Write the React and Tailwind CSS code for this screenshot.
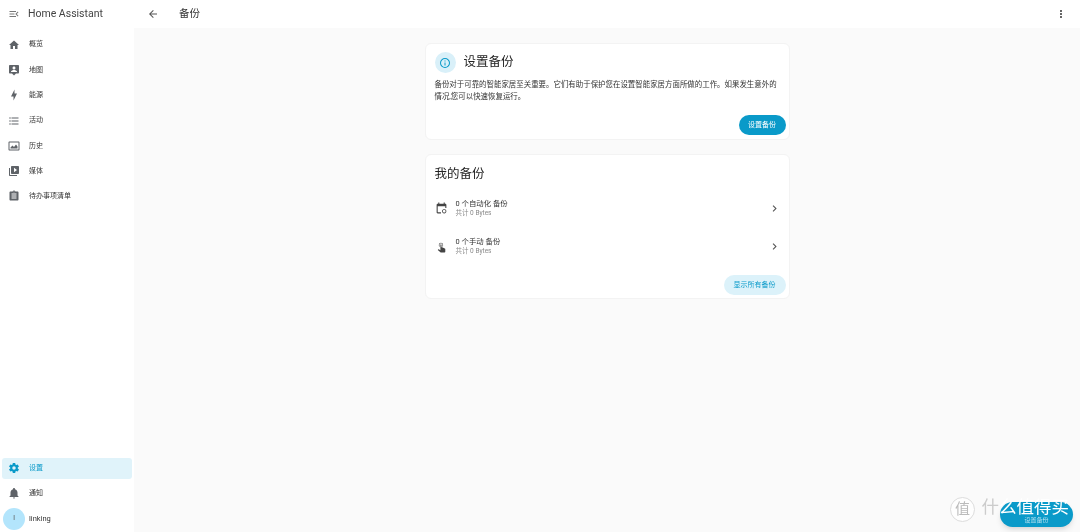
import React from "react";
import { MdArrowBack, MdChevronRight, MdMoreVert } from "react-icons/md";

const cjk = "font-['Roboto','Noto_Sans_CJK_SC',sans-serif]";

// mdi icon paths
const paths = {
  menu: "M21 15.61L19.59 17L14.58 12L19.59 7L21 8.39L17.44 12L21 15.61M3 6H16V8H3V6M3 13V11H13V13H3M3 18V16H16V18H3Z",
  home: "M10 20V14H14V20H19V12H22L12 3L2 12H5V20H10Z",
  map: "M20 2H4C2.9 2 2 2.9 2 4V17C2 18.1 2.9 19 4 19H8L12 23L16 19H20C21.1 19 22 18.1 22 17V4C22 2.9 21.1 2 20 2M12 5C13.66 5 15 6.34 15 8S13.66 11 12 11 9 9.66 9 8 10.34 5 12 5M18 16H6V15C6 13 10 11.9 12 11.9S18 13 18 15V16Z",
  bolt: "M11 15H6L13 1V9H18L11 23V15Z",
  list: "M7 5H21V7H7V5M7 13V11H21V13H7M4 4.5C4.83 4.5 5.5 5.17 5.5 6S4.83 7.5 4 7.5 2.5 6.83 2.5 6 3.17 4.5 4 4.5M4 10.5C4.83 10.5 5.5 11.17 5.5 12S4.83 13.5 4 13.5 2.5 12.83 2.5 12 3.17 10.5 4 10.5M7 19V17H21V19H7M4 16.5C4.83 16.5 5.5 17.17 5.5 18S4.83 19.5 4 19.5 2.5 18.83 2.5 18 3.17 16.5 4 16.5Z",
  history: "M21 3H3C1.9 3 1 3.9 1 5V19C1 20.1 1.9 21 3 21H21C22.1 21 23 20.1 23 19V5C23 3.9 22.1 3 21 3M21 19H3V5H21V19M5 17H19V13L16 9L12 14L9 11L5 15V17Z",
  media: "M4 6H2V20C2 21.1 2.9 22 4 22H18V20H4V6M20 2H8C6.9 2 6 2.9 6 4V16C6 17.1 6.9 18 8 18H20C21.1 18 22 17.1 22 16V4C22 2.9 21.1 2 20 2M12 14.5V5.5L18 10L12 14.5Z",
  todo: "M19 3H14.82C14.4 1.84 13.3 1 12 1S9.6 1.84 9.18 3H5C3.9 3 3 3.9 3 5V19C3 20.1 3.9 21 5 21H19C20.1 21 21 20.1 21 19V5C21 3.9 20.1 3 19 3M12 3C12.55 3 13 3.45 13 4S12.55 5 12 5 11 4.55 11 4 11.45 3 12 3M17 17H7V15H17V17M17 13H7V11H17V13M17 9H7V7H17V9Z",
  cog: "M12 15.5A3.5 3.5 0 0 1 8.5 12A3.5 3.5 0 0 1 12 8.5A3.5 3.5 0 0 1 15.5 12A3.5 3.5 0 0 1 12 15.5M19.43 12.97C19.47 12.65 19.5 12.33 19.5 12C19.5 11.67 19.47 11.34 19.43 11L21.54 9.37C21.73 9.22 21.78 8.95 21.66 8.73L19.66 5.27C19.54 5.05 19.27 4.96 19.05 5.05L16.56 6.05C16.04 5.66 15.5 5.32 14.87 5.07L14.5 2.42C14.46 2.18 14.25 2 14 2H10C9.75 2 9.54 2.18 9.5 2.42L9.13 5.07C8.5 5.32 7.96 5.66 7.44 6.05L4.95 5.05C4.73 4.96 4.46 5.05 4.34 5.27L2.34 8.73C2.21 8.95 2.27 9.22 2.46 9.37L4.57 11C4.53 11.34 4.5 11.67 4.5 12C4.5 12.33 4.53 12.65 4.57 12.97L2.46 14.63C2.27 14.78 2.21 15.05 2.34 15.27L4.34 18.73C4.46 18.95 4.73 19.03 4.95 18.95L7.44 17.94C7.96 18.34 8.5 18.68 9.13 18.93L9.5 21.58C9.54 21.82 9.75 22 10 22H14C14.25 22 14.46 21.82 14.5 21.58L14.87 18.93C15.5 18.67 16.04 18.34 16.56 17.94L19.05 18.95C19.27 19.03 19.54 18.95 19.66 18.73L21.66 15.27C21.78 15.05 21.73 14.78 21.54 14.63L19.43 12.97Z",
  bell: "M21 19V20H3V19L5 17V11C5 7.9 7.03 5.17 10 4.29V4C10 2.9 10.9 2 12 2S14 2.9 14 4V4.29C16.97 5.17 19 7.9 19 11V17L21 19M14 21C14 22.1 13.1 23 12 23S10 22.1 10 21",
  info: "M11 9H13V7H11M12 20C7.59 20 4 16.41 4 12S7.59 4 12 4 20 7.59 20 12 16.41 20 12 20M12 2A10 10 0 0 0 2 12A10 10 0 0 0 12 22A10 10 0 0 0 22 12A10 10 0 0 0 12 2M11 17H13V11H11V17Z",
  calendar: "M19 3H18V1H16V3H8V1H6V3H5C3.9 3 3 3.9 3 5V19C3 20.1 3.9 21 5 21H11V19H5V8H19V11H21V5C21 3.9 20.1 3 19 3M17 13C14.8 13 13 14.8 13 17S14.8 21 17 21 21 19.2 21 17 19.2 13 17 13M17 19.5C15.6 19.5 14.5 18.4 14.5 17S15.6 14.5 17 14.5 19.5 15.6 19.5 17 18.4 19.5 17 19.5Z",
  hand: "M10 9A1 1 0 0 1 11 8A1 1 0 0 1 12 9V13.47L13.21 13.6L18.15 15.79C18.68 16.03 19 16.56 19 17.14V21.5C18.97 22.32 18.32 22.97 17.5 23H11C10.62 23 10.26 22.85 10 22.57L5.1 18.37L5.84 17.6C6.03 17.39 6.3 17.28 6.58 17.28H6.8L10 19V9M11 5A4 4 0 0 1 15 9C15 10.5 14.2 11.77 13 12.46V11.24C13.61 10.69 14 9.89 14 9A3 3 0 0 0 11 6A3 3 0 0 0 8 9C8 9.89 8.39 10.69 9 11.24V12.46C7.8 11.77 7 10.5 7 9A4 4 0 0 1 11 5Z",
};

function Icon({ name, className }) {
  return (
    <svg viewBox="0 0 24 24" fill="currentColor" className={className}>
      <path d={paths[name]} />
    </svg>
  );
}

const navItems = [
  { icon: "home", label: "概览" },
  { icon: "map", label: "地图" },
  { icon: "bolt", label: "能源" },
  { icon: "list", label: "活动" },
  { icon: "history", label: "历史" },
  { icon: "media", label: "媒体" },
  { icon: "todo", label: "待办事项清单" },
];

function NavItem({ icon, label }) {
  return (
    <div className="flex h-[25.3px] items-center pl-[8px]">
      <Icon name={icon} className="h-[12px] w-[12px] text-[#5f6368]" />
      <span className="ml-[9px] text-[7px] text-[#333]">{label}</span>
    </div>
  );
}

function BackupRow({ icon, title }) {
  return (
    <div className="flex h-[38px] items-center pl-[9px] pr-[8px]">
      <Icon name={icon} className="h-[13px] w-[13px] text-[#444]" />
      <div className="ml-[8px] flex-1">
        <div className="text-[7.4px] leading-[11px] text-[#333]">{title}</div>
        <div className="text-[6.5px] leading-[9px] text-[#8a8a8a]">共计 0 Bytes</div>
      </div>
      <MdChevronRight className="h-[13px] w-[13px] text-[#555]" />
    </div>
  );
}

export default function App() {
  return (
    <div className={`relative flex h-[532px] w-[1080px] overflow-hidden bg-[#fafafa] blur-[0.5px] ${cjk}`}>
      <aside className="flex w-[134px] flex-col justify-between bg-white">
        <div>
          <div className="flex h-[27px] items-center pl-[8px]">
            <Icon name="menu" className="h-[12px] w-[12px] text-[#777]" />
            <span className="ml-[8px] text-[10.5px] text-[#444]">Home Assistant</span>
          </div>
          <nav className="pt-[5px]">
            {navItems.map((item) => (
              <NavItem key={item.label} {...item} />
            ))}
          </nav>
        </div>
        <div className="pb-[1px]">
          <div className="mx-[2px] flex h-[21px] items-center rounded-[3px] bg-[#e0f3fa] pl-[6px]">
            <Icon name="cog" className="h-[12px] w-[12px] text-[#0a9ac9]" />
            <span className="ml-[9px] text-[7px] text-[#0a9ac9]">设置</span>
          </div>
          <div className="mt-[2px]">
            <NavItem icon="bell" label="通知" />
          </div>
          <div className="flex h-[25px] items-center pl-[3px]">
            <div className="flex h-[22px] w-[22px] items-center justify-center rounded-full bg-[#b3e5fc] text-[7px] text-[#555]">
              l
            </div>
            <span className="ml-[4px] text-[7.5px] text-[#333]">linking</span>
          </div>
        </div>
      </aside>

      <div className="flex flex-1 flex-col">
        <header className="flex h-[28px] items-center bg-white pb-[1px] pl-[13px] pr-[13px]">
          <MdArrowBack className="h-[12px] w-[12px] text-[#555]" />
          <span className="ml-[20px] flex-1 text-[10.5px] text-[#333]">备份</span>
          <MdMoreVert className="h-[12px] w-[12px] text-[#444]" />
        </header>

        <main className="flex flex-col items-center pt-[15px]">
          <section className="flex h-[97px] w-[365px] flex-col rounded-[6px] border border-[#f3f3f3] bg-white">
            <div className="flex items-center pl-[9px] pt-[8px]">
              <div className="flex h-[21px] w-[21px] items-center justify-center rounded-full bg-[#d9f0f9]">
                <Icon name="info" className="h-[12px] w-[12px] text-[#0a9ac9]" />
              </div>
              <h2 className="ml-[8px] text-[12.5px] font-normal text-[#222]">设置备份</h2>
            </div>
            <p className="mt-[6px] pl-[9px] pr-[6px] text-[7.45px] leading-[12px] text-[#333]">
              备份对于可靠的智能家居至关重要。它们有助于保护您在设置智能家居方面所做的工作。如果发生意外的情况,您可以快速恢复运行。
            </p>
            <div className="mt-auto flex justify-end pb-[4px] pr-[3px]">
              <button className="flex h-[20px] w-[47px] items-center justify-center rounded-full bg-[#0a9ac9] text-[7px] text-white">
                设置备份
              </button>
            </div>
          </section>

          <section className="mt-[14px] flex h-[145px] w-[365px] flex-col rounded-[6px] border border-[#f3f3f3] bg-white">
            <h2 className="pl-[9px] pt-[10px] text-[12.5px] font-normal leading-[18px] text-[#222]">我的备份</h2>
            <div className="mt-[6px]">
              <BackupRow icon="calendar" title="0 个自动化 备份" />
              <BackupRow icon="hand" title="0 个手动 备份" />
            </div>
            <div className="mt-auto flex justify-end pb-[3px] pr-[3px]">
              <button className="flex h-[20px] w-[62px] items-center justify-center rounded-full bg-[#dcf2fa] text-[7px] text-[#0a9ac9]">
                显示所有备份
              </button>
            </div>
          </section>
        </main>
      </div>

      {/* floating button under the site watermark */}
      <div className="absolute left-[1000px] top-[502px] flex h-[25px] w-[73px] items-end justify-center rounded-full bg-[#0a9ac9] pb-[3px] text-[6px] leading-[9px] text-white/70 shadow-md">
        设置备份
      </div>
      <div className="absolute left-[950px] top-[497px] flex items-start">
        <div className="flex h-[25px] w-[25px] items-center justify-center rounded-full border border-[#ddd] bg-white/80 text-[15px] text-[#bbb]">
          值
        </div>
        <span className="ml-[6.5px] text-[17.5px] leading-[20px] text-[#ccc]">什</span>
        <span className="text-[17.5px] leading-[20px] text-white">么值得买</span>
      </div>
    </div>
  );
}
